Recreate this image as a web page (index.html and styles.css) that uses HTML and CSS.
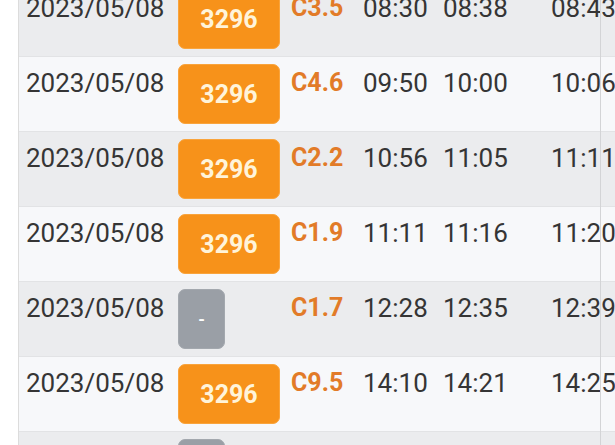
FILE: index.html
```html
<html>
  <head>
    <title>Trips</title>
    <link rel="stylesheet" href="styles.css">
  </head>
  <body>
    <div class="list">
      <div class="row">
        <div class="date">2023/05/08</div>
        <div><span class="badge">3296</span></div>
        <div class="grade">C3.5</div>
        <div class="time">08:30</div>
        <div class="time">08:38</div>
        <div class="time">08:43</div>
      </div>
      <div class="row">
        <div class="date">2023/05/08</div>
        <div><span class="badge">3296</span></div>
        <div class="grade">C4.6</div>
        <div class="time">09:50</div>
        <div class="time">10:00</div>
        <div class="time">10:06</div>
      </div>
      <div class="row">
        <div class="date">2023/05/08</div>
        <div><span class="badge">3296</span></div>
        <div class="grade">C2.2</div>
        <div class="time">10:56</div>
        <div class="time">11:05</div>
        <div class="time">11:11</div>
      </div>
      <div class="row">
        <div class="date">2023/05/08</div>
        <div><span class="badge">3296</span></div>
        <div class="grade">C1.9</div>
        <div class="time">11:11</div>
        <div class="time">11:16</div>
        <div class="time">11:20</div>
      </div>
      <div class="row">
        <div class="date">2023/05/08</div>
        <div><span class="badge empty">-</span></div>
        <div class="grade">C1.7</div>
        <div class="time">12:28</div>
        <div class="time">12:35</div>
        <div class="time">12:39</div>
      </div>
      <div class="row">
        <div class="date">2023/05/08</div>
        <div><span class="badge">3296</span></div>
        <div class="grade">C9.5</div>
        <div class="time">14:10</div>
        <div class="time">14:21</div>
        <div class="time">14:25</div>
      </div>
      <div class="row">
        <div class="date">2023/05/08</div>
        <div><span class="badge empty">-</span></div>
        <div class="grade">C2.0</div>
        <div class="time">15:02</div>
        <div class="time">15:10</div>
        <div class="time">15:14</div>
      </div>
    </div>
    <div class="divider"></div>
  </body>
</html>
```

FILE: styles.css
```css
/* page */
body {
  margin: 0;
  background: #fff;
  font-family: Roboto, "Noto Sans", sans-serif;
  color: #353535;
  overflow: hidden;
}
.list {
  margin: -18px 0 0 18px;
  border-left: 1px solid #dcdcdc;
}
.row {
  display: grid;
  grid-template-columns: 152px 113px 72px 80px 108px 1fr;
  height: 74px;
  padding-left: 7px;
  border-bottom: 1px solid #e2e3e5;
  background-color: #ebecee;
  white-space: nowrap;
}
.row:nth-child(even) {
  background-color: #f7f8fa;
}
.date, .time, .grade {
  font-size: 26px;
  line-height: 30px;
  padding-top: 11px;
}
.grade {
  font-weight: bold;
  color: #e27b28;
  font-size: 25px;
}
/* badge */
.badge {
  display: inline-flex;
  align-items: center;
  justify-content: center;
  height: 60px;
  margin-top: 7px;
  box-sizing: border-box;
  width: 102px;
  border-radius: 7px;
  border: 1px solid #f9a43c;
  background-color: #f7921a;
  color: #fff4da;
  font-size: 25px;
  font-weight: bold;
}
.badge.empty {
  width: 47px;
  border-color: #a3a8ae;
  background-color: #9a9fa6;
  color: #fff;
  font-size: 17px;
}
/* right edge line sits over the last column */
.divider {
  position: absolute;
  top: 0;
  left: 600px;
  width: 1px;
  height: 100%;
  background-color: #d3d4d6;
}
```
